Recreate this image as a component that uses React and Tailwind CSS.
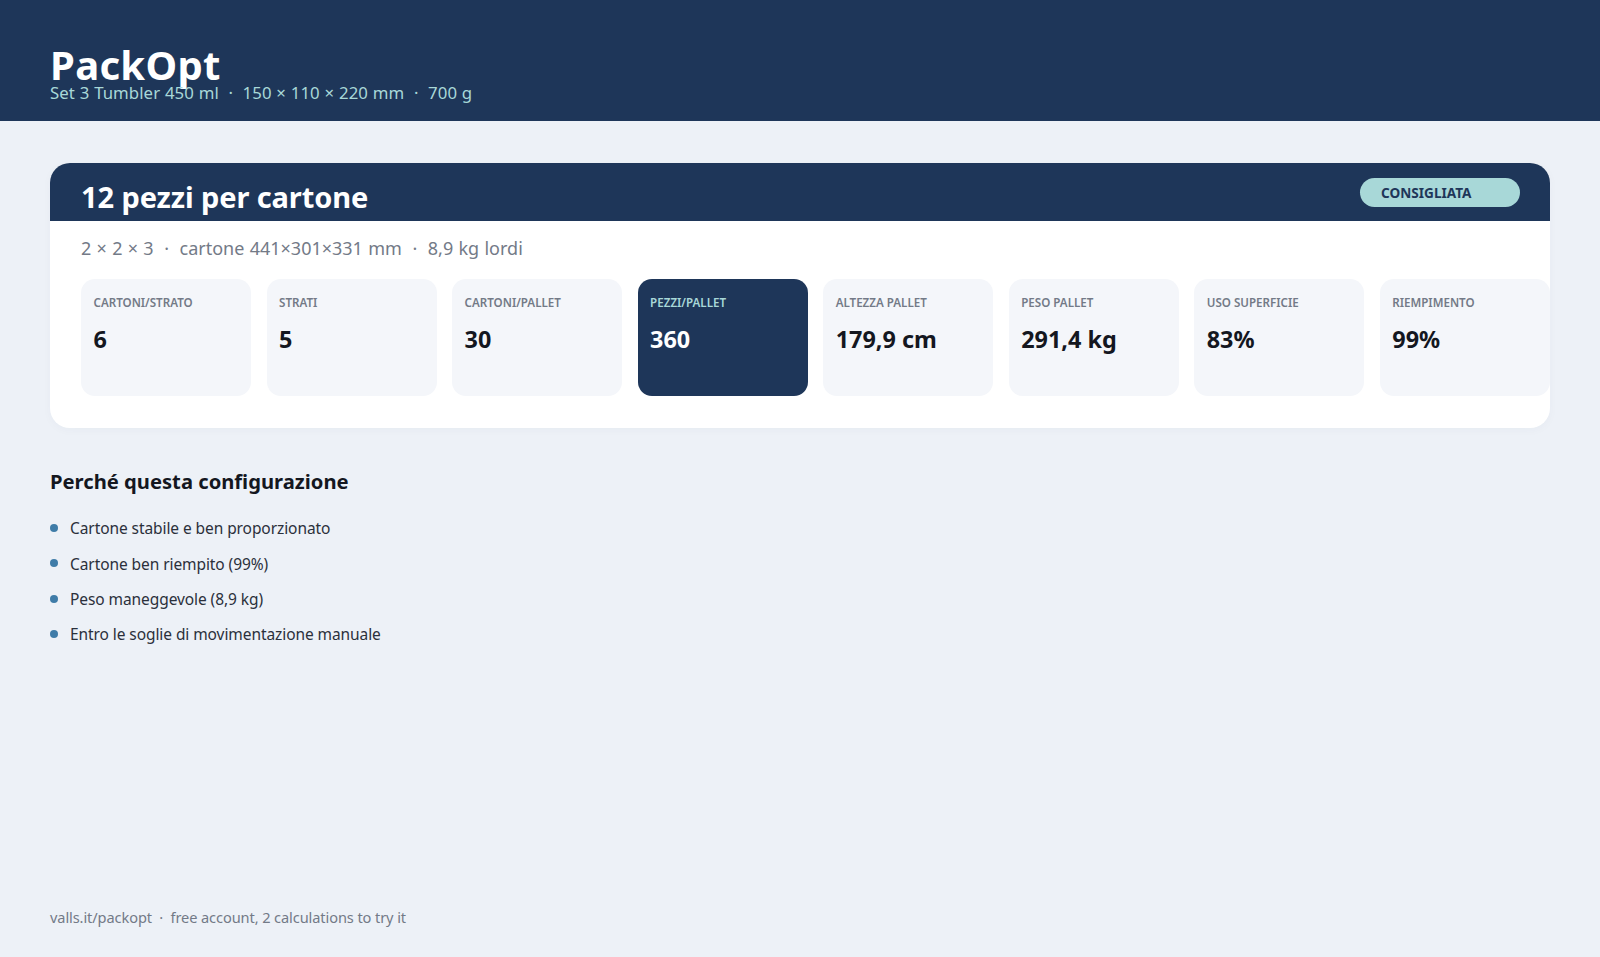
const stats = [
  ["CARTONI/STRATO", "6"],
  ["STRATI", "5"],
  ["CARTONI/PALLET", "30"],
  ["PEZZI/PALLET", "360", true],
  ["ALTEZZA PALLET", "179,9 cm"],
  ["PESO PALLET", "291,4 kg"],
  ["USO SUPERFICIE", "83%"],
  ["RIEMPIMENTO", "99%"],
];

const reasons = [
  "Cartone stabile e ben proporzionato",
  "Cartone ben riempito (99%)",
  "Peso maneggevole (8,9 kg)",
  "Entro le soglie di movimentazione manuale",
];

export default function App() {
  return (
    <div className="h-[957px] flex flex-col bg-[#edf1f7] text-[#14171f] font-['Noto_Sans',sans-serif] overflow-hidden">
      <header className="h-[121px] shrink-0 bg-[#1e3659] px-[50px] pt-[40px]">
        <h1 className="text-[40px] leading-[50px] font-bold text-white tracking-[0.3px]">PackOpt</h1>
        <p className="mt-[-9px] text-[16.8px] leading-[24px] text-[#a8d8d8] tracking-[0.05px] [word-spacing:0.4px] whitespace-pre">
          {"Set 3 Tumbler 450 ml  ·  150 × 110 × 220 mm  ·  700 g"}
        </p>
      </header>

      <main className="flex-1 flex flex-col px-[50px] pt-[42px] pb-[29px]">
        <section className="h-[265px] bg-white rounded-[20px] overflow-hidden shadow-[0_2px_10px_rgba(30,54,89,0.03)]">
          <div className="h-[58px] bg-[#1e3659] pl-[31px] pr-[30px] flex items-start justify-between">
            <h2 className="mt-[14px] text-[29px] leading-[40px] font-bold text-white tracking-[-0.1px]">12 pezzi per cartone</h2>
            <span className="mt-[15px] w-[160px] h-[29px] rounded-full bg-[#a8d8d8] pl-[21px] text-[13.6px] leading-[30px] font-bold text-[#1e3659]">
              CONSIGLIATA
            </span>
          </div>
          <p className="pl-[31px] mt-[13px] text-[18px] leading-[28px] text-[#737a87] [word-spacing:0.6px] whitespace-pre">
            {"2 × 2 × 3  ·  cartone 441×301×331 mm  ·  8,9 kg lordi"}
          </p>
          <div className="mt-[17px] pl-[31px] grid grid-cols-8 gap-[15.3px]">
            {stats.map(([label, value, active]) => (
              <div
                key={label}
                className={`h-[117px] rounded-[14px] px-[12.5px] pt-[16px] ${active ? "bg-[#1e3659]" : "bg-[#f4f6fa]"}`}
              >
                <div className={`text-[11.6px] leading-[16px] font-semibold ${active ? "text-[#a8d8d8]" : "text-[#737a87]"}`}>
                  {label}
                </div>
                <div className={`mt-[12px] text-[23.4px] leading-[32px] font-bold ${active ? "text-white" : "text-[#14171f]"}`}>
                  {value}
                </div>
              </div>
            ))}
          </div>
        </section>

        <h3 className="mt-[39px] text-[20.2px] leading-[28px] font-bold">Perché questa configurazione</h3>

        <ul className="mt-[21px] flex flex-col gap-[9.3px]">
          {reasons.map((r) => (
            <li key={r} className="flex items-center gap-[12px] h-[26px] text-[15.5px] text-[#2b303b] tracking-[-0.08px]">
              <span className="w-[8px] h-[8px] rounded-full bg-[#3f7ca8] shrink-0 mt-[-2px]" />
              {r}
            </li>
          ))}
        </ul>

        <footer className="mt-auto text-[14.6px] leading-[22px] text-[#737a87] tracking-[-0.1px] whitespace-pre">
          {"valls.it/packopt  ·  free account, 2 calculations to try it"}
        </footer>
      </main>
    </div>
  );
}
